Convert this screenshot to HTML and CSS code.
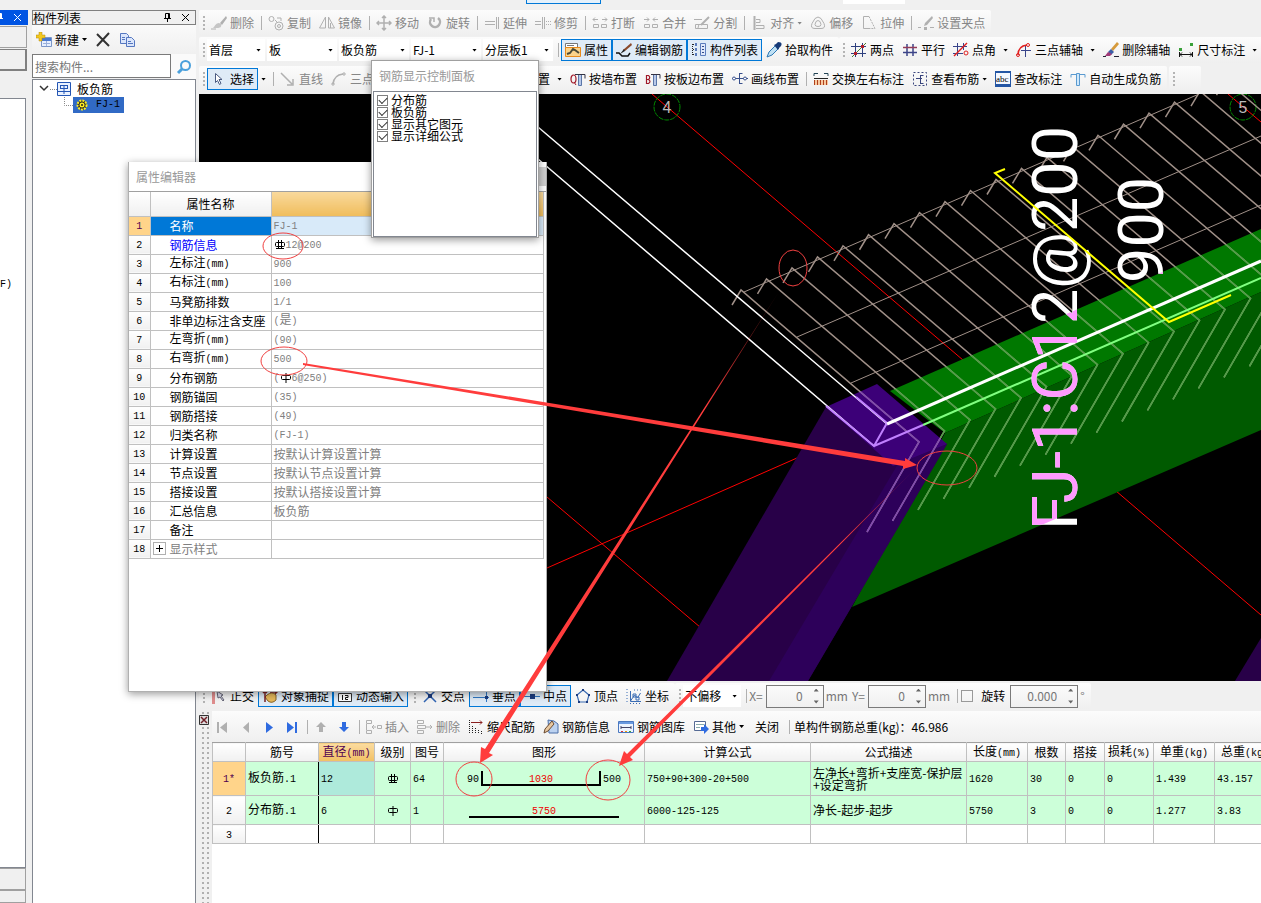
FILE: index.html
```html
<!DOCTYPE html>
<html lang="zh-CN">
<head>
  <meta charset="UTF-8" />
  <title>构件列表 - 板负筋</title>
  <meta name="viewport" content="width=device-width, initial-scale=1" />
  <link rel="stylesheet" href="styles.css">
</head>
<body>

  <!-- icon sprite -->
  <svg class="sprite" aria-hidden="true">
    <symbol id="brush" viewBox="0 0 16 16"><path d="M15 1l-6 7 2 2 5-7z" fill="currentColor"/><path d="M8 8c-3 0-4 3-6 5h4c3 0 5-1 4-4z" fill="currentColor" opacity=".7"/><path d="M0 14h5" stroke="currentColor"/></symbol>
    <symbol id="copy" viewBox="0 0 16 16" fill="none" stroke="currentColor"><circle cx="3.500" cy="4" r="2.500"/><circle cx="11" cy="11" r="4"/><circle cx="11" cy="11" r="1.500"/><path d="M9 3h4v3M7 5l2 2"/></symbol>
    <symbol id="mirror" viewBox="0 0 16 16" fill="none" stroke="currentColor"><path d="M6.500 2v11H.5zM9.500 2v11h6z"/><path d="M11.500 8v5"/></symbol>
    <symbol id="move" viewBox="0 0 16 16" fill="none" stroke="currentColor" stroke-width="1.500"><path d="M8 1v14M1 8h14M6 3l2-2 2 2M6 13l2 2 2-2M3 6L1 8l2 2M13 6l2 2-2 2"/></symbol>
    <symbol id="rotate" viewBox="0 0 16 16" fill="none" stroke="currentColor" stroke-width="2.500"><path d="M4 4a5 5 0 1 0 7-1"/><path d="M2 3h5v4" stroke-width="1.500"/></symbol>
    <symbol id="extend" viewBox="0 0 16 16" fill="none" stroke="currentColor"><path d="M1 6.500h7M1 9.500h7M8 6.500h3M8 9.500h3" /><path d="M12.500 2v12M14.500 2v12"/></symbol>
    <symbol id="trim" viewBox="0 0 16 16" fill="none" stroke="currentColor"><path d="M0 6.500h6M0 9.500h6M7.500 2v12M9.500 2v12"/><path d="M11 6.500h5M11 9.500h5" stroke-dasharray="1 1"/></symbol>
    <symbol id="break" viewBox="0 0 16 16" fill="none" stroke="currentColor"><path d="M1 4.500h5M3 2.500l-2 2 2 2M10 4.500h5M13 2.500l2 2-2 2M1.500 9.500h5v3h-5zM9.500 9.500h5v3h-5z"/></symbol>
    <symbol id="merge" viewBox="0 0 16 16" fill="none" stroke="currentColor"><path d="M1 4.500h5M4 2.500l2 2-2 2M10 4.500h5M12 2.500l-2 2 2 2M1.500 9.500h5v3h-5zM9.500 9.500h5v3h-5z"/></symbol>
    <symbol id="split" viewBox="0 0 16 16" fill="none" stroke="currentColor"><path d="M0 4.500h8M1.500 9.500h12v4h-12zM5 9l-1 4"/><path d="M15 2l-8 8" stroke-width="2"/></symbol>
    <symbol id="align" viewBox="0 0 16 16" fill="none" stroke="currentColor"><path d="M3.500 1v14" stroke-width="2"/><path d="M5 4.500h4v3H5M5 10.500h8v3H5"/></symbol>
    <symbol id="offset" viewBox="0 0 16 16" fill="none" stroke="currentColor"><path d="M5 3.500Q8 .5 11 3.500l3 5q2 5-3 5H5q-5 0-3-5z"/><path d="M6 6.500q2-2 4 0l1 3q0 2-3 2t-3-2z"/></symbol>
    <symbol id="stretch" viewBox="0 0 16 16" fill="none" stroke="currentColor"><path d="M8 1.500H2.500v12H8"/><path d="M8 1.500l6 12H8" stroke-dasharray="2 1"/></symbol>
    <symbol id="grip-edit" viewBox="0 0 16 16"><path d="M14 1L7 8l-1 3 3-1 6-7z" fill="currentColor"/><path d="M0 12.500h3M12 12.500h4" stroke="currentColor"/><path d="M6 12h3v3H6z" fill="currentColor"/></symbol>
    <symbol id="attrs" viewBox="0 0 16 16"><path d="M.5 1.500h12v4H.5z" fill="#fff" stroke="#777"/><path d="M2 3.500h7" stroke="#777"/><path d="M.5 5.500h15v9H.5z" fill="#fbd38a" stroke="#e98a1a"/><path d="M2 12l3-1 3-4 2 1 4 3" fill="none" stroke="#4a4a38" stroke-width="2"/></symbol>
    <symbol id="edit-bar" viewBox="0 0 16 16"><path d="M15 1L7 8l2 1 7-6z" fill="#8b4a2b"/><path d="M8 7l-4 5 5-3z" fill="#222"/><path d="M0 11h3l3 3h6l2-3" fill="none" stroke="#111" stroke-width="1.500"/></symbol>
    <symbol id="list" viewBox="0 0 16 16"><path d="M2 2.500h4M2 7.500h4M2 12.500h4M1.500 2v11" stroke="#222" stroke-dasharray="1 1"/><path d="M4 1h2v3H4zM4 6h2v3H4zM4 11h2v3H4z" fill="#5b7cbc"/><path d="M9.500 1.500h5v12h-5z" fill="#dfe8fa" stroke="#5b7cbc"/><path d="M11 4.500h2M11 7.500h2M11 10.500h2" stroke="#334b8a"/></symbol>
    <symbol id="pick" viewBox="0 0 16 16"><path d="M10 3L3 10l-2 5 5-2 7-7z" fill="#bfe0f4" stroke="#2c78b4"/><path d="M8 3l2-1 2-2q5 0 3 4l-2 2-1 2z" fill="#173a78"/></symbol>
    <symbol id="two-pts" viewBox="0 0 16 16" fill="none" stroke="#2d3f7e"><path d="M0 4.500h15M0 11.500h15M4.500 1v14M11.500 1v14"/><path d="M1 15L15 1" stroke="#4a7f30"/><path d="M3 10h3v3H3zM10 3h3v3h-3z" fill="#b2202a" stroke="none"/></symbol>
    <symbol id="parallel" viewBox="0 0 16 16" fill="none" stroke="#3c4488" stroke-width="1.500"><path d="M5 2v12M11 2v12"/><path d="M1 5.500h14" stroke="#943b58"/><path d="M1 10.500h14"/></symbol>
    <symbol id="angle" viewBox="0 0 16 16" fill="none" stroke="#38448a"><path d="M0 4.500h14M0 11.500h10M4.500 1v13M10.500 1v7"/><path d="M1 14L14 1" stroke="#e02020" stroke-width="1.500"/><circle cx="13" cy="11" r="2" stroke="#e02020"/></symbol>
    <symbol id="three-pts" viewBox="0 0 16 16" fill="none" stroke="#38448a"><path d="M9.500 3v12M5 8.500h10"/><path d="M2 13q0-9 9-10" stroke="#e02020" stroke-width="1.500"/><circle cx="2" cy="13" r="1.500" stroke="#e02020"/><circle cx="12" cy="3" r="1.500" stroke="#e02020"/></symbol>
    <symbol id="del-axis" viewBox="0 0 16 16"><path d="M14 0L8 7l2 2 6-7z" fill="#d69a3c"/><path d="M8 7l-3 3 3 3 3-3z" fill="#3c5fa8"/><path d="M5 10l-3 4 5 0 2-2z" fill="#a03a78"/><path d="M0 14.500h3M11 14.500h5" stroke="#223"/></symbol>
    <symbol id="dim" viewBox="0 0 16 16"><path d="M1 6h3v3H1zM12 1h3v3h-3z" fill="#38a038"/><path d="M1.500 10v5M14.500 10v5M2 12.500h12M4 10.500l-2 2 2 2M12 10.500l2 2-2 2" stroke="#111" fill="none"/></symbol>
    <symbol id="cursor" viewBox="0 0 16 16"><path d="M4.500 2.500v9l2-2 2 4 1.500-1-2-4h3z" fill="#fff" stroke="#4a5a80"/></symbol>
    <symbol id="line" viewBox="0 0 16 16" fill="none" stroke="currentColor"><path d="M1 2l11 11M13 8v6H7" stroke-width="1.500"/></symbol>
    <symbol id="arc" viewBox="0 0 16 16" fill="none" stroke="currentColor"><path d="M2 13Q3 4 12 3" stroke-width="1.500"/><path d="M1 12h2v2H1zM12 2h2v2h-2z"/></symbol>
    <symbol id="by-wall" viewBox="0 0 16 16"><ellipse cx="3.500" cy="8" rx="2.500" ry="4" fill="none" stroke="#a01828" stroke-width="1.200"/><path d="M4 11l2 3" stroke="#a01828"/><path d="M8.500 3.500h3v11h-3z" fill="#b8c8e8" stroke="#5a76a8"/><path d="M5 3.500h10v4" fill="none" stroke="#334"/></symbol>
    <symbol id="by-edge" viewBox="0 0 16 16"><path d="M1.500 4.500v8h2q3-2 0-4 2.500-2 0-4zM2 8.500h2" fill="none" stroke="#a01828" stroke-width="1.200"/><path d="M8.500 3.500h3v11h-3z" fill="#b8c8e8" stroke="#5a76a8"/><path d="M6 3.500h9v4" fill="none" stroke="#334"/></symbol>
    <symbol id="by-line" viewBox="0 0 16 16" fill="none" stroke="#38508c"><path d="M0 7.500h16M7.500 2v11M7.500 2.500h3M7.500 12.500h3"/><circle cx="2" cy="7.500" r="1.500" fill="#fff"/><circle cx="13" cy="7.500" r="1.500" fill="#fff"/></symbol>
    <symbol id="swap" viewBox="0 0 16 16"><path d="M1 5V2.500h4M15 5V2.500h-4" fill="none" stroke="#245"/><path d="M1 7.500h14" stroke="#222"/><path d="M1 9h14v5H1z" fill="#f7c9a0"/><path d="M1.500 9v5M4.500 9v5M7.500 9v5M10.500 9v5M13.500 9v5" stroke="#b0401c"/></symbol>
    <symbol id="view-bar" viewBox="0 0 16 16" fill="none" stroke="#38447c"><path d="M1.500 1.500h13v13h-13z" stroke-dasharray="2 2"/><path d="M4 7.500h6M8.500 4v9M8.500 4.500h3M8.500 12.500h3"/></symbol>
    <symbol id="abc" viewBox="0 0 16 16"><path d="M0 0h16v16H0z" fill="#2456a4"/><path d="M1 2h14v11H1z" fill="#f4f8ff"/><text x="1" y="11" class="abc-text">abc</text></symbol>
    <symbol id="auto-bar" viewBox="0 0 16 16"><path d="M1 6.500v-3h14v3" fill="none" stroke="#5a9ad0"/><path d="M6.500 2.500h3v12h-3z" fill="#cfe8fb" stroke="#5a9ad0"/></symbol>
    <symbol id="ortho" viewBox="0 0 16 16"><path d="M1 0h3v16H1z" fill="#df8d8d"/><path d="M6 3l1 7 2-1 3 4 1-1-3-4 2-1z" fill="#dde" stroke="#667"/></symbol>
    <symbol id="snap" viewBox="0 0 16 16"><path d="M5 7q5-4 9 0v5q-4 4-8 1L3 9z" fill="#e6b95c" stroke="#8a6424"/><path d="M3 14V4M1 5l2-2 2 2M8 4h7M13 2l2 2-2 2" stroke="#7a2020" fill="none" stroke-width="1.500"/></symbol>
    <symbol id="dyn" viewBox="0 0 16 16"><path d="M1.500 5.500h13v8h-13z" fill="#fff" stroke="#333"/><path d="M0 3.500h16" stroke="#555"/><path d="M5.500 7v5M8 7.500h3v2H8.500v2H11" stroke="#111" fill="none"/></symbol>
    <symbol id="cross" viewBox="0 0 16 16"><path d="M2 14L14 2M2 2l12 12" stroke="#2f64b4" stroke-width="1.500"/><path d="M6 6h4v4H6z" fill="#1c3c80"/></symbol>
    <symbol id="perp" viewBox="0 0 16 16"><path d="M0 9.500h16M13.500 2v12" stroke="#2f78c4"/><path d="M12 8h3v3h-3z" fill="#1c3c80"/></symbol>
    <symbol id="mid" viewBox="0 0 16 16"><path d="M0 8.500h16" stroke="#2f78c4"/><path d="M6 6h5v5H6z" fill="#1c3c80"/></symbol>
    <symbol id="vertex" viewBox="0 0 16 16"><path d="M8 2l6 5-2 7H4L2 7z" fill="none" stroke="#3a6cb4" stroke-width="1.200"/><path d="M7 1h2v2H7zM13 6h2v2h-2zM1 6h2v2H1zM3 13h2v2H3zM11 13h2v2h-2z" fill="#1c3c80"/></symbol>
    <symbol id="coord" viewBox="0 0 16 16" fill="none" stroke="#3a6cb4"><path d="M4.500 3v10.500H15M4.500 13l4-6 3 3 3-5"/><path d="M1 1v14M8 2h7M4 15.500h11" stroke-dasharray="1 2"/><path d="M7 6h3v3H7zM10 9h3v3h-3z"/></symbol>
    <symbol id="first" viewBox="0 0 16 16" fill="currentColor"><path d="M2 3h2v11H2zM12 3v11L5 8.500z"/></symbol>
    <symbol id="prev" viewBox="0 0 16 16" fill="currentColor"><path d="M11 3v11L5 8.500z"/></symbol>
    <symbol id="next" viewBox="0 0 16 16" fill="#2f6be0"><path d="M5 3v11l7-5.500z"/></symbol>
    <symbol id="last" viewBox="0 0 16 16" fill="#2f6be0"><path d="M3 3v11l7-5.500zM11 3h2v11h-2z"/></symbol>
    <symbol id="up" viewBox="0 0 16 16" fill="currentColor"><path d="M8 3l5 5h-3v5H6V8H3z"/></symbol>
    <symbol id="down" viewBox="0 0 16 16" fill="#2f6be0"><path d="M8 13l5-5h-3V3H6v5H3z"/></symbol>
    <symbol id="insert" viewBox="0 0 16 16" fill="none" stroke="currentColor"><path d="M.5 1.500h5v3h-5zM.5 11.500h5v3h-5zM11.500 6.500h4v3h-4zM10 8H6M8 6L6 8l2 2M.5 5v6"/></symbol>
    <symbol id="remove" viewBox="0 0 16 16" fill="none" stroke="currentColor"><path d="M.5 1.500h6v3h-6zM.5 11.500h6v3h-6zM.5 6.500h8v3h-8zM9 8h6M13 6l2 2-2 2"/></symbol>
    <symbol id="scale-bar" viewBox="0 0 16 16" fill="none" stroke="#222"><path d="M1.500 1v14M4.500 7v8M7.500 9v6M10.500 11v4M13.500 12v3" stroke-dasharray="1 1"/><path d="M3 3.500h11M12 1.500l2 2-2 2" stroke="#8a2020"/></symbol>
    <symbol id="bar-info" viewBox="0 0 16 16"><path d="M5 1l6 1 4 3v9H6z" fill="#bcd2f0" stroke="#4a6ea8"/><path d="M9 2l-7 8-1 4 4-2 6-7z" fill="#e8c8a0" stroke="#6a4a30"/></symbol>
    <symbol id="bar-lib" viewBox="0 0 16 16"><path d="M.5 2.500h15v11H.5z" fill="#eef4ff" stroke="#4a78c0"/><path d="M1 3h14v2H1z" fill="#6a9ae0"/><path d="M3 8.500h10M3 7v3M13 7v3" stroke="#446" fill="none"/><path d="M3 12.500h2" stroke="#d33"/><path d="M7 12.500h2" stroke="#e90"/><path d="M11 12.500h2" stroke="#3a3"/></symbol>
    <symbol id="other" viewBox="0 0 16 16"><path d="M1.500 2.500h11v9h-11z" fill="#fff" stroke="#556a94"/><path d="M3 5.500h8M3 8.500h4" stroke="#8aa"/><path d="M8 8h3V5l5 5-5 5v-3H8z" fill="#2f6be0"/></symbol>
    <symbol id="pin" viewBox="0 0 9 9" fill="none" stroke="currentColor"><path d="M2.500 5V.5h4V5M5.500 1v4M1 5.500h7M4.500 6v3"/></symbol>
    <symbol id="close" viewBox="0 0 9 9" fill="none" stroke="currentColor"><path d="M1 1l7 7M8 1L1 8"/></symbol>
    <symbol id="new" viewBox="0 0 16 16"><path d="M5.500 5.500h10v9h-10z" fill="#e6efff" stroke="#7b96c8"/><path d="M6 6h9v3H6z" fill="#4a7ad0"/><path d="M7 11.500h7M10.500 9v5" stroke="#9ab0dc"/><path d="M3 0h3v3h3v3H6v3H3V6H0V3h3z" fill="#f2c820" stroke="#b08a10" stroke-width=".5"/></symbol>
    <symbol id="delete" viewBox="0 0 16 16"><path d="M2 2l12 12M14 1L2 14" stroke="#333" stroke-width="2" fill="none"/></symbol>
    <symbol id="dup" viewBox="0 0 16 16" fill="#dbe6fb" stroke="#5577c0"><path d="M1.500 1.500h6l2 2v8h-8z"/><path d="M7.500 5.500h5l3 3v6h-8z"/><path d="M9 9.500h3M9 11.500h5M3 5.500h3M3 7.500h3"/></symbol>
    <symbol id="search" viewBox="0 0 16 16" fill="none" stroke="#4aa0dc"><circle cx="9.500" cy="6.500" r="4.500" stroke-width="2"/><path d="M6 10l-4 4" stroke-width="3"/></symbol>
    <symbol id="node" viewBox="0 0 14 14" fill="none"><path d="M.5.500h13v13H.5z" fill="#eaf2ff" stroke="#2456b4"/><path d="M3 3.500h8M3 6.500h8M7 3v9M3.500 3v4M10.500 3v4M1 9.500h12" stroke="#2456b4"/></symbol>
    <symbol id="gear" viewBox="0 0 14 14"><circle cx="7" cy="7" r="4.500" fill="#222" stroke="#ffee20" stroke-width="2" stroke-dasharray="2 1"/><circle cx="7" cy="7" r="2.500" fill="#ffee20"/><circle cx="7" cy="7" r="1" fill="#222"/></symbol>
    <!-- rebar grade marks -->
    <symbol id="grade-a" viewBox="0 0 12 12" fill="none" stroke="#000"><path d="M1.500 4.500q0-1 1-1h7q1 0 1 1v2q0 1-1 1h-7q-1 0-1-1zM6 1v10"/></symbol>
    <symbol id="grade-c" viewBox="0 0 12 12" fill="none" stroke="#000"><path d="M1.500 4.500q0-1 1-1h7q1 0 1 1v2q0 1-1 1h-7q-1 0-1-1zM4.500 1v8M7.500 1v8M2 9.500h8"/></symbol>
  </svg>

  <!-- far left dock, cut by the window edge -->
  <aside class="edge-dock">
    <div class="dock-title dock-title-active">
      <svg class="i9"><use href="#pin"/></svg>
      <svg class="i9"><use href="#close"/></svg>
    </div>
    <div class="edge-tab"></div>
    <div class="edge-tab edge-tab-on"></div>
    <div class="edge-body">F)</div>
    <div class="edge-foot"></div>
    <div class="edge-foot"></div>
  </aside>

  <aside class="list-dock">
    <div class="dock-title">
      <span>构件列表</span>
      <svg class="i9"><use href="#pin"/></svg>
      <svg class="i9"><use href="#close"/></svg>
    </div>
    <div class="list-tools">
      <button class="tool"><svg class="ico"><use href="#new"/></svg>新建<i class="caret"></i></button>
      <button class="tool" aria-label="删除构件"><svg class="ico"><use href="#delete"/></svg></button>
      <button class="tool" aria-label="复制构件"><svg class="ico"><use href="#dup"/></svg></button>
    </div>
    <div class="search">
      <input type="text" placeholder="搜索构件..." aria-label="搜索构件">
      <button class="search-btn" aria-label="搜索"><svg class="ico"><use href="#search"/></svg></button>
    </div>
    <div class="tree">
      <div class="tree-row">
        <svg class="chev" viewBox="0 0 18 10"><path d="M1 2l4 4 4-4" fill="none" stroke="#333" stroke-width="1.500"/><path d="M11 5.500h7" stroke="#888" stroke-dasharray="1 1"/></svg>
        <svg class="i14"><use href="#node"/></svg>
        <span class="tree-label">板负筋</span>
      </div>
      <div class="tree-row tree-child">
        <svg class="elbow" viewBox="0 0 10 16"><path d="M1.500 0v8.500H10" fill="none" stroke="#888" stroke-dasharray="1 1"/></svg>
        <span class="tree-sel"><svg class="i14"><use href="#gear"/></svg>FJ-1</span>
      </div>
    </div>
  </aside>

  <main>
    <div class="top-edge"><span class="top-tab"></span><span class="top-box"></span></div>

    <div class="bar bar-edit">
      <div class="group off">
        <i class="grip"></i>
        <button class="tool"><svg class="ico"><use href="#brush"/></svg>删除</button>
        <i class="sep"></i>
        <button class="tool"><svg class="ico"><use href="#copy"/></svg>复制</button>
        <button class="tool"><svg class="ico"><use href="#mirror"/></svg>镜像</button>
        <i class="sep"></i>
        <button class="tool"><svg class="ico"><use href="#move"/></svg>移动</button>
        <button class="tool"><svg class="ico"><use href="#rotate"/></svg>旋转</button>
        <i class="sep"></i>
        <button class="tool"><svg class="ico"><use href="#extend"/></svg>延伸</button>
        <button class="tool"><svg class="ico"><use href="#trim"/></svg>修剪</button>
        <i class="sep"></i>
        <button class="tool"><svg class="ico"><use href="#break"/></svg>打断</button>
        <button class="tool"><svg class="ico"><use href="#merge"/></svg>合并</button>
        <button class="tool"><svg class="ico"><use href="#split"/></svg>分割</button>
        <i class="sep"></i>
        <button class="tool"><svg class="ico"><use href="#align"/></svg>对齐<i class="caret"></i></button>
        <button class="tool"><svg class="ico"><use href="#offset"/></svg>偏移</button>
        <button class="tool"><svg class="ico"><use href="#stretch"/></svg>拉伸</button>
        <i class="sep"></i>
        <button class="tool"><svg class="ico"><use href="#grip-edit"/></svg>设置夹点</button>
      </div>
    </div>

    <div class="bar bar-pick">
      <div class="group">
        <i class="grip"></i>
        <label class="combo combo-short"><select aria-label="楼层"><option>首层</option></select></label>
        <label class="combo"><select aria-label="构件类别"><option>板</option></select></label>
        <label class="combo"><select aria-label="构件类型"><option>板负筋</option></select></label>
        <label class="combo"><select aria-label="构件"><option>FJ-1</option></select></label>
        <label class="combo"><select aria-label="分层"><option>分层板1</option></select></label>
        <i class="sep"></i>
        <button class="tool on"><svg class="ico"><use href="#attrs"/></svg>属性</button>
        <button class="tool on"><svg class="ico"><use href="#edit-bar"/></svg>编辑钢筋</button>
        <button class="tool on"><svg class="ico"><use href="#list"/></svg>构件列表</button>
        <button class="tool"><svg class="ico"><use href="#pick"/></svg>拾取构件</button>
      </div>
      <div class="group group-fill">
        <i class="grip"></i>
        <button class="tool"><svg class="ico"><use href="#two-pts"/></svg>两点</button>
        <button class="tool"><svg class="ico"><use href="#parallel"/></svg>平行</button>
        <button class="tool"><svg class="ico"><use href="#angle"/></svg>点角</button><i class="drop"></i>
        <button class="tool"><svg class="ico"><use href="#three-pts"/></svg>三点辅轴</button><i class="drop"></i>
        <button class="tool"><svg class="ico"><use href="#del-axis"/></svg>删除辅轴</button>
        <button class="tool"><svg class="ico"><use href="#dim"/></svg>尺寸标注</button><i class="drop"></i>
      </div>
    </div>

    <div class="bar bar-draw">
      <div class="group">
        <i class="grip"></i>
        <button class="tool on"><svg class="ico"><use href="#cursor"/></svg>选择</button><i class="drop"></i>
        <i class="sep"></i>
        <button class="tool off"><svg class="ico"><use href="#line"/></svg>直线</button>
        <button class="tool off"><svg class="ico"><use href="#arc"/></svg>三点</button>
        <span class="blank"></span>
        <button class="tool">布置</button><i class="drop"></i>
        <button class="tool"><svg class="ico"><use href="#by-wall"/></svg>按墙布置</button>
        <button class="tool"><svg class="ico"><use href="#by-edge"/></svg>按板边布置</button>
        <button class="tool"><svg class="ico"><use href="#by-line"/></svg>画线布置</button>
        <i class="sep"></i>
        <button class="tool"><svg class="ico"><use href="#swap"/></svg>交换左右标注</button>
        <button class="tool"><svg class="ico"><use href="#view-bar"/></svg>查看布筋<i class="caret"></i></button>
        <button class="tool"><svg class="ico"><use href="#abc"/></svg>查改标注</button>
        <button class="tool"><svg class="ico"><use href="#auto-bar"/></svg>自动生成负筋</button>
      </div>
      <div class="group group-stub"><i class="grip"></i></div>
    </div>

    <div class="scene">
      <svg class="scene-svg">
        <defs>
          <clipPath id="clipGreen"><path d="M890 391L1261 229V430L852 607L946 443z"/></clipPath>
          <clipPath id="clipPurple"><path d="M826 407L877 384L947 444L808 681H667z"/></clipPath>
          <g id="rebars" fill="none" stroke="currentColor" stroke-width="1.500"></g>
        </defs>
        <g transform="translate(-199 -94)">
          <g stroke="#f00" fill="none">
            <path d="M652 94L1261 615M1228 94l33 28M547 497l160 136M547 568l250-110"/>
          </g>
          <g fill="none" stroke="#008a00" stroke-dasharray="5 1">
            <circle cx="667" cy="107" r="13"/><circle cx="1243" cy="107" r="13"/>
          </g>
          <g class="axis-text"><text x="667" y="113">4</text><text x="1243" y="113">5</text></g>

          <path d="M890 391L1261 229V292L945 433z" fill="#007800"/>
          <path d="M945 433L1261 292V430L852 607z" fill="#005a00"/>
          <path d="M826 407L667 681H808L947 444z" fill="#280048"/>
          <path d="M898 464L947 444L808 681H769z" fill="#2d005a"/>
          <path d="M826 407L877 384L947 444L893 466z" fill="#3c0078"/>
          <path d="M1261 638L1235 681H1261z" fill="#280048"/>

          <path d="M744 292L1199 94M797 337L1261 136M851 383L1261 205" fill="none" stroke="#a09088"/>
          <use href="#rebars" color="#a09088"/>
          <g clip-path="url(#clipGreen)"><use href="#rebars" color="#50a046"/></g>
          <g clip-path="url(#clipPurple)"><use href="#rebars" color="#8048b0"/></g>

          <path d="M538 127L887 424M538 159L874 446" stroke="#fff" stroke-width="1.500"/>
          <path d="M923 425L1261 278" stroke="#80ff80" stroke-width="2"/>
          <path d="M826 406l48 40 13-23M856 397l31 26M874 446l49-21" fill="none" stroke="#c080ff" stroke-width="2"/>
          <path d="M887 424L1261 261" stroke="#fff" stroke-width="3"/>

          <g class="mark-text">
            <text transform="translate(1077 530) rotate(-90)">FJ-1:C12@200</text>
            <text transform="translate(1163 283) rotate(-90)">900</text>
          </g>
          <g class="mark-pink" clip-path="url(#clipGreen)" aria-hidden="true"></g>
          <path d="M1005 169l-10 4 174 149 62-27" fill="none" stroke="#ff0" stroke-width="2"/>
        </g>
      </svg>
    </div>

    <div class="bar bar-snap">
      <div class="group">
        <i class="grip"></i>
        <button class="tool"><svg class="ico"><use href="#ortho"/></svg>正交</button>
        <button class="tool on"><svg class="ico"><use href="#snap"/></svg>对象捕捉</button>
        <button class="tool on"><svg class="ico"><use href="#dyn"/></svg>动态输入</button>
      </div>
      <div class="group">
        <i class="grip"></i>
        <button class="tool"><svg class="ico"><use href="#cross"/></svg>交点</button>
        <button class="tool on"><svg class="ico"><use href="#perp"/></svg>垂点</button>
        <button class="tool on"><svg class="ico"><use href="#mid"/></svg>中点</button>
        <button class="tool"><svg class="ico"><use href="#vertex"/></svg>顶点</button>
        <button class="tool"><svg class="ico"><use href="#coord"/></svg>坐标</button>
      </div>
      <div class="group">
        <i class="grip"></i>
        <label class="combo combo-short"><select aria-label="偏移方式"><option>不偏移</option></select></label>
        <i class="sep"></i>
        <label class="field"><span>X=</span><span class="spin"><input type="text" value="0"><i></i></span></label><span class="unit">mm</span>
        <label class="field"><span>Y=</span><span class="spin"><input type="text" value="0"><i></i></span></label><span class="unit">mm</span>
        <i class="sep"></i>
        <label class="check"><input type="checkbox">旋转</label>
        <span class="spin spin-wide"><input type="text" value="0.000" aria-label="旋转角度"><i></i></span><span class="unit">°</span>
      </div>
    </div>

    <section class="bar-dock">
      <div class="dock-grip"><svg viewBox="0 0 10 10"><path d="M.5.500h9v9h-9z" fill="#ddd" stroke="#333"/><path d="M2 2l6 6M8 2L2 8" stroke="#702028" stroke-width="1.500"/></svg></div>
      <div class="dock-main">
        <div class="bar bar-rebar">
          <button class="nav off" aria-label="第一条"><svg class="ico"><use href="#first"/></svg></button>
          <button class="nav off" aria-label="上一条"><svg class="ico"><use href="#prev"/></svg></button>
          <button class="nav" aria-label="下一条"><svg class="ico"><use href="#next"/></svg></button>
          <button class="nav" aria-label="最后一条"><svg class="ico"><use href="#last"/></svg></button>
          <i class="sep"></i>
          <button class="nav off" aria-label="上移"><svg class="ico"><use href="#up"/></svg></button>
          <button class="nav" aria-label="下移"><svg class="ico"><use href="#down"/></svg></button>
          <i class="sep"></i>
          <button class="tool off"><svg class="ico"><use href="#insert"/></svg>插入</button>
          <button class="tool off"><svg class="ico"><use href="#remove"/></svg>删除</button>
          <button class="tool"><svg class="ico"><use href="#scale-bar"/></svg>缩尺配筋</button>
          <button class="tool"><svg class="ico"><use href="#bar-info"/></svg>钢筋信息</button>
          <button class="tool"><svg class="ico"><use href="#bar-lib"/></svg>钢筋图库</button>
          <button class="tool"><svg class="ico"><use href="#other"/></svg>其他<i class="caret"></i></button>
          <button class="tool tool-text">关闭</button>
          <i class="sep"></i>
          <span class="total">单构件钢筋总重(kg)：46.986</span>
        </div>
        <div class="sheet-wrap">
          <table class="sheet">
            <colgroup><col class="c33"><col class="c73"><col class="c56"><col class="c36"><col class="c33"><col class="c201"><col class="c166"><col class="c156"><col class="c61"><col class="c38"><col class="c39"><col class="c49"><col class="c61"><col class="c61"></colgroup>
            <thead>
              <tr><th></th><th>筋号</th><th class="hot">直径<small>(mm)</small></th><th>级别</th><th>图号</th><th>图形</th><th>计算公式</th><th>公式描述</th><th>长度<small>(mm)</small></th><th>根数</th><th>搭接</th><th>损耗<small>(%)</small></th><th>单重<small>(kg)</small></th><th>总重<small>(kg)</small></th></tr>
            </thead>
            <tbody>
              <tr class="r1">
                <th class="hot"><small>1*</small></th><td>板负筋<small>.1</small></td><td class="cur"><small>12</small></td><td class="mid"><svg class="i12"><use href="#grade-c"/></svg></td><td><small>64</small></td>
                <td class="shape"><small>90</small><span class="bar-u"><small>1030</small></span><small>500</small></td>
                <td><small>750+90+300-20+500</small></td><td>左净长+弯折+支座宽-保护层<br>+设定弯折</td><td><small>1620</small></td><td><small>30</small></td><td><small>0</small></td><td><small>0</small></td><td><small>1.439</small></td><td><small>43.157</small></td>
              </tr>
              <tr class="r2">
                <th><small>2</small></th><td>分布筋<small>.1</small></td><td><small>6</small></td><td class="mid"><svg class="i12"><use href="#grade-a"/></svg></td><td><small>1</small></td>
                <td class="shape"><span class="bar-line"><small>5750</small></span></td>
                <td><small>6000-125-125</small></td><td>净长-起步-起步</td><td><small>5750</small></td><td><small>3</small></td><td><small>0</small></td><td><small>0</small></td><td><small>1.277</small></td><td><small>3.83</small></td>
              </tr>
              <tr class="r3"><th><small>3</small></th><td></td><td></td><td></td><td></td><td></td><td></td><td></td><td></td><td></td><td></td><td></td><td></td><td></td></tr>
            </tbody>
          </table>
        </div>
      </div>
    </section>
  </main>

  <section class="window prop-window">
    <header>属性编辑器<span class="win-close"></span></header>
    <table class="props">
      <thead><tr><th></th><th>属性名称</th><th class="hot"></th></tr></thead>
      <tbody>
        <tr class="sel"><th><small>1</small></th><td>名称</td><td><small>FJ-1</small></td></tr>
        <tr class="key"><th><small>2</small></th><td>钢筋信息</td><td><svg class="i12"><use href="#grade-c"/></svg><small>12@200</small></td></tr>
        <tr><th><small>3</small></th><td>左标注<small>(mm)</small></td><td><small>900</small></td></tr>
        <tr><th><small>4</small></th><td>右标注<small>(mm)</small></td><td><small>100</small></td></tr>
        <tr><th><small>5</small></th><td>马凳筋排数</td><td><small>1/1</small></td></tr>
        <tr><th><small>6</small></th><td>非单边标注含支座</td><td><small>(</small>是<small>)</small></td></tr>
        <tr><th><small>7</small></th><td>左弯折<small>(mm)</small></td><td><small>(90)</small></td></tr>
        <tr><th><small>8</small></th><td>右弯折<small>(mm)</small></td><td><small>500</small></td></tr>
        <tr><th><small>9</small></th><td>分布钢筋</td><td><small>(</small><svg class="i12"><use href="#grade-a"/></svg><small>6@250)</small></td></tr>
        <tr><th><small>10</small></th><td>钢筋锚固</td><td><small>(35)</small></td></tr>
        <tr><th><small>11</small></th><td>钢筋搭接</td><td><small>(49)</small></td></tr>
        <tr><th><small>12</small></th><td>归类名称</td><td><small>(FJ-1)</small></td></tr>
        <tr><th><small>13</small></th><td>计算设置</td><td>按默认计算设置计算</td></tr>
        <tr><th><small>14</small></th><td>节点设置</td><td>按默认节点设置计算</td></tr>
        <tr><th><small>15</small></th><td>搭接设置</td><td>按默认搭接设置计算</td></tr>
        <tr><th><small>16</small></th><td>汇总信息</td><td>板负筋</td></tr>
        <tr><th><small>17</small></th><td>备注</td><td></td></tr>
        <tr class="folded"><th><small>18</small></th><td><button class="plus" aria-label="展开"></button>显示样式</td><td></td></tr>
      </tbody>
    </table>
  </section>

  <section class="window show-window">
    <header>钢筋显示控制面板</header>
    <div class="show-list">
      <label><input type="checkbox" checked>分布筋</label>
      <label><input type="checkbox" checked>板负筋</label>
      <label><input type="checkbox" checked>显示其它图元</label>
      <label><input type="checkbox" checked>显示详细公式</label>
    </div>
  </section>

  <!-- red callouts across the windows -->
  <svg class="callouts" aria-hidden="true">
    <defs>
      <linearGradient id="fade" x1="1" y1="0" x2="0" y2="1"><stop offset="0" stop-color="#ff3c3c" stop-opacity=".1"/><stop offset=".25" stop-color="#ff3c3c"/></linearGradient>
    </defs>
    <g fill="none" stroke="#f04040" stroke-width="1">
      <ellipse cx="283" cy="246" rx="20" ry="13"/>
      <ellipse cx="284" cy="361" rx="23" ry="14"/>
      <ellipse cx="793" cy="268" rx="14" ry="18"/>
      <ellipse cx="947" cy="468" rx="30" ry="17"/>
      <ellipse cx="474" cy="779" rx="18" ry="17"/>
      <ellipse cx="608" cy="780" rx="22" ry="20"/>
    </g>
    <path d="M303 363L905 461V458L917 465L903 469V466L303 365z" fill="#ff3c3c"/>
    <path d="M780 290L489 753L493 755L480 763L481 747L485 749z" fill="url(#fade)"/>
    <path d="M915 469L630 757L633 760L619 766L624 751L627 754z" fill="url(#fade)"/>
  </svg>

  <script src="scene.js"></script>
</body>
</html>
```

FILE: styles.css
```css
* {
  box-sizing: border-box;
}

body {
  margin: 0;
  height: 100vh;
  display: flex;
  overflow: hidden;
  background: #f0f0f0;
  color: #000;
  font-family: "Noto Sans CJK SC", sans-serif;
  font-size: 12px;
  line-height: 16px;
}

button, input, select {
  font: inherit;
  color: inherit;
}

small {
  font-family: "Liberation Mono", monospace;
  font-size: 10px;
}

.sprite {
  position: absolute;
  width: 0;
  height: 0;
}

.ico { width: 16px; height: 16px; flex: none; }
.i14 { width: 14px; height: 14px; flex: none; }
.i12 { width: 12px; height: 12px; vertical-align: middle; }
.i9 { width: 9px; height: 9px; flex: none; }

.abc-text {
  font-family: "Liberation Serif", serif;
  font-size: 9px;
}

/* left docks */
.edge-dock {
  width: 28px;
  flex: none;
  padding-top: 10px;
  display: flex;
  flex-direction: column;
}

.dock-title {
  height: 15px;
  display: flex;
  align-items: center;
  gap: 9px;
  padding-right: 5px;
  border: 1px solid #808080;
}

.dock-title span {
  flex: 1;
}

.dock-title-active {
  background: #0054e3;
  border-color: #0054e3;
  color: #fff;
  justify-content: flex-end;
}

.edge-tab {
  height: 22px;
  width: 27px;
  margin-top: 1px;
  border: 1px solid #a0a0a0;
  border-left: 0;
}

.edge-tab-on {
  border-color: #808080;
  border-width: 1px 2px 2px 0;
}

.edge-body {
  flex: 1;
  width: 26px;
  margin-top: 27px;
  padding-top: 178px;
  background: #fff;
  border: 1px solid #828790;
  border-left: 0;
  font-family: "Liberation Mono", monospace;
  font-size: 10px;
}

.edge-foot {
  height: 22px;
  width: 26px;
  border: 1px solid #a0a0a0;
  border-left: 0;
}

.edge-foot + .edge-foot {
  height: 13px;
}

.list-dock {
  width: 164px;
  flex: none;
  margin-left: 4px;
  padding-top: 10px;
  display: flex;
  flex-direction: column;
}

.list-tools {
  display: flex;
  align-items: center;
  height: 29px;
  background: linear-gradient(#fafafa, #f0f0f0);
}

.search {
  display: flex;
  height: 25px;
}

.search input {
  width: 139px;
  height: 24px;
  padding: 0 2px;
  border: 1px solid #7a7a7a;
  background: #fff;
}

.search input::placeholder {
  color: #777;
}

.search-btn {
  flex: 1;
  display: grid;
  place-items: center;
  padding: 0;
  border: 0;
  background: #fafafa;
}

.tree {
  flex: 1;
  background: #fff;
  border: 1px solid #828790;
  border-bottom: 0;
  padding: 1px 0 0 6px;
}

.tree-row {
  display: flex;
  align-items: center;
  height: 16px;
}

.chev { width: 18px; height: 10px; }
.elbow { width: 10px; height: 16px; }

.tree-label {
  margin-left: 6px;
}

.tree-child {
  padding-left: 24px;
}

.tree-sel {
  display: flex;
  align-items: center;
  gap: 7px;
  height: 16px;
  padding: 0 4px 0 2px;
  background: #316ac5;
  font-family: "Liberation Mono", monospace;
  font-size: 10px;
}

/* main column */
main {
  flex: 1;
  min-width: 0;
  margin-left: 3px;
  display: flex;
  flex-direction: column;
}

.top-edge {
  height: 10px;
  display: flex;
}

.top-tab {
  width: 75px;
  height: 4px;
  margin-left: 327px;
  border: 1px solid #0078d7;
  border-top: 0;
  background: #e5f1fb;
}

.top-box {
  width: 62px;
  height: 4px;
  margin-left: 242px;
  background: #fff;
}

.bar {
  display: flex;
  align-items: center;
  white-space: nowrap;
}

.bar-edit { height: 26px; }
.bar-pick { height: 28px; }
.bar-draw { height: 30px; }
.bar-snap { height: 30px; flex: none; }
.bar-rebar { height: 31px; background: linear-gradient(#fcfcfc, #efefef); }

.group {
  display: flex;
  align-items: center;
  height: 26px;
  padding: 0 2px 0 3px;
  background: linear-gradient(#fcfcfc, #efefef);
  border-radius: 2px;
}

.group-fill {
  flex: 1;
}

.grip {
  width: 2px;
  height: 14px;
  margin: 0 2px 0 1px;
  background: repeating-linear-gradient(#b4b4b4 0 2px, transparent 2px 4px);
}

.sep {
  width: 1px;
  height: 14px;
  margin: 0 2px 0 3px;
  background: #b0b0b0;
}

.tool {
  display: flex;
  align-items: center;
  gap: 3px;
  height: 22px;
  padding: 0 3px;
  border: 1px solid transparent;
  background: none;
}

.tool-text {
  padding: 0 6px;
}

.on {
  border-color: #0078d7;
  background: #dfebf7;
}

.off {
  color: #868686;
}

.off .ico {
  color: #b0b0b0;
}

.caret,
.drop,
.combo::after {
  content: "";
  width: 5px;
  height: 3px;
  background: currentColor;
  clip-path: polygon(0 0, 100% 0, 50% 100%);
}

.drop {
  margin: 0 4px 0 3px;
}

.combo {
  width: 70px;
  height: 22px;
  margin-right: 2px;
  padding-right: 4px;
  display: flex;
  align-items: center;
  background: #fff;
}

.combo-short {
  width: 58px;
}

.combo select {
  flex: 1;
  min-width: 0;
  padding: 0 2px;
  border: 0;
  appearance: none;
  background: none;
}

.blank {
  width: 144px;
}

.group-stub {
  width: 32px;
  margin-left: 2px;
}

.scene {
  flex: 1;
  min-height: 0;
  background: #000;
}

.scene-svg {
  display: block;
  width: 100%;
  height: 100%;
}

.axis-text {
  fill: #bbb;
  font-family: "Liberation Sans", sans-serif;
  font-size: 16px;
  text-anchor: middle;
}

.mark-text,
.mark-pink {
  fill: #fff;
  font-family: Roboto, sans-serif;
  font-size: 63px;
}

.mark-pink {
  fill: #ff9aff;
}

.field,
.check {
  display: flex;
  align-items: center;
  gap: 3px;
  color: #777;
}

.check {
  gap: 8px;
  color: #000;
}

.check input {
  appearance: none;
  width: 12px;
  height: 12px;
  margin: 0 0 0 1px;
  border: 1px solid #999;
}

.unit {
  margin: 0 4px 0 2px;
  color: #777;
}

.spin {
  display: flex;
  align-items: center;
  width: 58px;
  height: 23px;
  padding-right: 4px;
  border: 1px solid #7a7a7a;
  color: #777;
}

.spin-wide {
  width: 68px;
  margin-left: 5px;
}

.spin input {
  flex: 1;
  min-width: 0;
  padding: 0 11px 0 0;
  border: 0;
  background: none;
  text-align: right;
}

.spin i {
  width: 5px;
  height: 15px;
  background: #666;
  clip-path: polygon(50% 0, 100% 3px, 100% 3px, 0 3px, 0 12px, 100% 12px, 50% 100%, 0 12px, 0 3px);
}

/* rebar sheet */
.bar-dock {
  height: 192px;
  flex: none;
  display: flex;
}

.dock-grip {
  width: 13px;
  padding: 4px 2px 0 0;
  background: radial-gradient(circle at 1px 1px, #b0b0b0 1px, transparent 1px) 3px 16px / 5px 5px;
}

.dock-grip svg {
  display: block;
  width: 10px;
  height: 10px;
}

.dock-main {
  flex: 1;
  min-width: 0;
}

.nav {
  width: 23px;
  height: 22px;
  padding: 0 4px 0 3px;
  border: 0;
  background: none;
  display: flex;
  align-items: center;
}

.total {
  margin-left: 2px;
}

.sheet-wrap {
  height: 161px;
  overflow: hidden;
  background: #fff;
}

.sheet,
.props {
  border-collapse: collapse;
  table-layout: fixed;
  line-height: 12px;
}

.sheet {
  width: 1063px;
}

.c33 { width: 33px; }
.c36 { width: 36px; }
.c38 { width: 38px; }
.c39 { width: 39px; }
.c49 { width: 49px; }
.c56 { width: 56px; }
.c61 { width: 61px; }
.c73 { width: 73px; }
.c156 { width: 156px; }
.c166 { width: 166px; }
.c201 { width: 201px; }

.sheet th,
.sheet td,
.props th,
.props td {
  border: 1px solid #c0c0c0;
  padding: 0 0 0 2px;
  font-weight: normal;
  text-align: left;
  white-space: nowrap;
}

.sheet th,
.props th {
  padding: 0;
  text-align: center;
  background: linear-gradient(#fff, #f0f0f0);
}

.sheet thead th { border-top-color: #a0a0a0; }
.sheet thead tr { height: 19px; }
.sheet .r1 { height: 34px; }
.sheet .r2 { height: 29px; }
.sheet .r3 { height: 19px; }

.r1 td,
.r2 td {
  background: #ccffd9;
}

.sheet .hot {
  background: #ffd48a;
  color: #500050;
}

.sheet thead .hot {
  background: linear-gradient(#fbdca0, #f2c064);
}

.sheet td.cur {
  background: #aeeadb;
}

/* frozen column edge */
.sheet td:nth-child(2) {
  border-right-color: #000;
}

.sheet td.mid,
.sheet td.shape {
  padding: 0;
  text-align: center;
}

.bar-u,
.bar-line {
  display: inline-block;
  color: #e00;
  border: solid #000;
}

.bar-u {
  width: 120px;
  height: 15px;
  margin: 0 2px;
  border-width: 0 2px 2px;
}

.bar-line {
  width: 150px;
  height: 15px;
  border-width: 0 0 2px;
}

/* floating windows */
.window {
  position: absolute;
  background: #fff;
  box-shadow: 0 2px 8px rgba(0, 0, 0, 0.4);
}

.window header {
  height: 30px;
  padding: 0 7px;
  display: flex;
  align-items: center;
  color: #999;
}

.prop-window {
  left: 128px;
  top: 162px;
  width: 419px;
  height: 530px;
  border: 1px solid #b0b0b0;
  border-top: 0;
}

.prop-window header {
  justify-content: space-between;
  padding-right: 0;
  border-bottom: 1px solid #a0a0a0;
}

.win-close {
  width: 40px;
  height: 19px;
  background: #d0d0d0;
}

.props {
  width: 415px;
}

.props th:first-child { width: 21px; border-left: 0; }
.props th:nth-child(2) { width: 121px; }
.props thead tr { height: 24px; }
.props thead th { border-top: 0; }
.props tbody tr { height: 19px; }

.props thead .hot {
  background: linear-gradient(#f9d99c, #f0bd5c);
}

.props td {
  padding-left: 19px;
}

.props .sel th { background: #ffd48a; color: #500050; }
.props .sel td { background: #0078d7; color: #fff; }
.props .sel td:last-child { background: #d8eaf9; }
.props .key td:nth-child(2) { color: #00f; }
.props .folded td { padding-left: 2px; color: #808080; }

.props td:last-child,
.props .sel td:last-child {
  padding-left: 2px;
  color: #808080;
}

.plus {
  width: 13px;
  height: 13px;
  margin: 0 4px 0 0;
  padding: 0;
  border: 1px solid #b0b0b0;
  vertical-align: bottom;
  background:
    linear-gradient(#000, #000) center / 7px 1px no-repeat,
    linear-gradient(#000, #000) center / 1px 7px no-repeat,
    #fff;
}

.show-window {
  left: 371px;
  top: 60px;
  width: 168px;
  height: 178px;
  border: 1px solid #a0a0a0;
}

.show-list {
  height: 146px;
  margin: 0 1px;
  padding: 2px 3px;
  border: 1px solid #828790;
}

.show-list label {
  display: flex;
  align-items: center;
  gap: 3px;
  height: 12px;
  line-height: 12px;
}

.show-list input {
  appearance: none;
  width: 11px;
  height: 11px;
  margin: 0;
  border: 1px solid #808080;
  display: grid;
  place-items: center;
}

.show-list input:checked::after {
  content: "";
  width: 7px;
  height: 4px;
  margin-bottom: 2px;
  border: solid #333;
  border-width: 0 0 1px 1px;
  transform: rotate(-45deg);
}

.callouts {
  position: absolute;
  inset: 0;
  width: 100%;
  height: 100%;
  pointer-events: none;
}
```

FILE: scene.js
```js
// Evenly spaced negative-moment bars: hook, straight run, bend leg.
const NS = 'http://www.w3.org/2000/svg';
const rebars = document.getElementById('rebars');

for (let i = 0; i < 24; i++) {
  const x = 741 + i * 25.5;
  const y = 290 - i * 11.05;
  const bar = document.createElementNS(NS, 'path');
  bar.setAttribute('d', `M${x - 9} ${y + 15}L${x} ${y}l178 152l-52 90`);
  rebars.appendChild(bar);
}

// Dimension text turns pink where it lies over the beam.
const pink = document.querySelector('.mark-pink');
document.querySelectorAll('.mark-text text').forEach(t => {
  pink.appendChild(t.cloneNode(true));
});
```
